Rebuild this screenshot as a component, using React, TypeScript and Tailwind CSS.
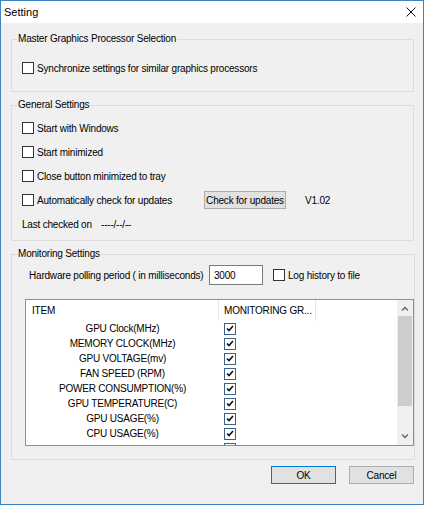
import React from 'react';

// the last entry sits below the visible area, only its checkbox edge peeks out
const ITEMS = [
  'GPU Clock(MHz)',
  'MEMORY CLOCK(MHz)',
  'GPU VOLTAGE(mv)',
  'FAN SPEED (RPM)',
  'POWER CONSUMPTION(%)',
  'GPU TEMPERATURE(C)',
  'GPU USAGE(%)',
  'CPU USAGE(%)',
  '',
];

const CheckBox = ({ checked = false }: { checked?: boolean }) => (
  <span
    className={`w-[12px] h-[12px] shrink-0 flex items-center justify-center bg-white border ${
      checked ? 'border-[#3d6189]' : 'border-[#333333]'
    }`}
  >
    {checked && (
      <svg width="8" height="7" viewBox="0 0 8 7">
        <path d="M1 3.5 L3 5.5 L7 1" fill="none" stroke="#111" strokeWidth="1.6" />
      </svg>
    )}
  </span>
);

const CheckRow = ({ label, className = '' }: { label: string; className?: string }) => (
  <label className={`flex items-center gap-[3px] ${className}`}>
    <CheckBox />
    <span>{label}</span>
  </label>
);

const GroupBox = ({ title, className = '', children }: { title: string; className?: string; children: React.ReactNode }) => (
  <fieldset className={`w-[403px] border border-[#dcdcdc] ${className}`}>
    <legend className="ml-[5px] px-[1px] leading-[14px]">{title}</legend>
    {children}
  </fieldset>
);

const Chevron = ({ up }: { up?: boolean }) => (
  <svg width="8" height="5" viewBox="0 0 8 5">
    <path d={up ? 'M1 4.5 L4 1.5 L7 4.5' : 'M1 0.5 L4 3.5 L7 0.5'} fill="none" stroke="#606060" strokeWidth="1.3" />
  </svg>
);

export default function App() {
  return (
    <div className="w-[424px] h-[505px] bg-[#f0f0f0] border border-[#3c84c6] flex flex-col text-[10px] tracking-[-0.2px] text-black font-['Liberation_Sans',Arial,sans-serif]">
      {/* title bar */}
      <div className="h-[22px] bg-white flex items-center justify-between pl-[3px] pr-[7px]">
        <span className="text-[11px] tracking-normal">Setting</span>
        <svg width="10" height="10" viewBox="0 0 10 10">
          <path d="M0.5 0.5 L9.5 9.5 M9.5 0.5 L0.5 9.5" stroke="#111" strokeWidth="1" />
        </svg>
      </div>

      <div className="flex flex-col pl-[10px]">
        <GroupBox title="Master Graphics Processor Selection" className="mt-[9px]">
          <div className="pt-[15px] pb-[16px] pl-[10px]">
            <CheckRow label="Synchronize settings for similar graphics processors" className="h-[14px]" />
          </div>
        </GroupBox>

        <GroupBox title="General Settings" className="mt-[6px]">
          <div className="pt-[4px] pb-[4px] pl-[10px] flex flex-col">
            <CheckRow label="Start with Windows" className="h-[24px]" />
            <CheckRow label="Start minimized" className="h-[24px]" />
            <CheckRow label="Close button minimized to tray" className="h-[24px]" />
            <div className="h-[24px] flex items-center">
              <CheckRow label="Automatically check for updates" className="w-[182px]" />
              <button className="w-[82px] h-[18px] bg-[#e1e1e1] border border-[#adadad] flex items-center justify-center">
                Check for updates
              </button>
              <span className="ml-[19px]">V1.02</span>
            </div>
            <div className="h-[24px] flex items-center">
              <span className="w-[79px]">Last checked on</span>
              <span>----/--/--</span>
            </div>
          </div>
        </GroupBox>

        <GroupBox title="Monitoring Settings" className="mt-[6px]">
          <div className="pt-[4px] pb-[13px] flex flex-col">
            <div className="h-[20px] flex items-center pl-[17px]">
              <span className="w-[180px]">Hardware polling period ( in milliseconds)</span>
              <div className="w-[54px] h-[20px] bg-white border border-[#7a7a7a] flex items-center pl-[4px]">3000</div>
              <CheckRow label="Log history to file" className="ml-[10px]" />
            </div>

            {/* monitoring item list */}
            <div className="mt-[14px] ml-[13px] w-[389px] h-[147px] bg-white border border-[#8c8f94] flex overflow-hidden">
              <div className="flex-1 flex flex-col">
                <div className="h-[21px] shrink-0 flex">
                  <div className="w-[193px] border-r border-[#e5e5e5] flex items-center pl-[6px]">ITEM</div>
                  <div className="w-[97px] border-r border-[#e5e5e5] flex items-center pl-[5px]">MONITORING GR...</div>
                </div>
                {ITEMS.map((item, i) => (
                  <div key={i} className="h-[15px] shrink-0 flex">
                    <div className="w-[193px] flex items-center justify-center">{item}</div>
                    <div className="pl-[5px] flex items-center">
                      <CheckBox checked />
                    </div>
                  </div>
                ))}
              </div>
              <div className="w-[16px] bg-[#f0f0f0] flex flex-col">
                <div className="h-[16px] flex items-center justify-center">
                  <Chevron up />
                </div>
                <div className="h-[90px] mx-[1px] bg-[#cdcdcd]" />
                <div className="flex-1" />
                <div className="h-[17px] flex items-center justify-center">
                  <Chevron />
                </div>
              </div>
            </div>
          </div>
        </GroupBox>
      </div>

      <div className="mt-[6px] flex justify-end gap-[13px] pr-[9px]">
        <button className="w-[65px] h-[18px] bg-[#e1e1e1] border border-[#0078d7] flex items-center justify-center">OK</button>
        <button className="w-[65px] h-[18px] bg-[#e1e1e1] border border-[#adadad] flex items-center justify-center">Cancel</button>
      </div>
    </div>
  );
}
